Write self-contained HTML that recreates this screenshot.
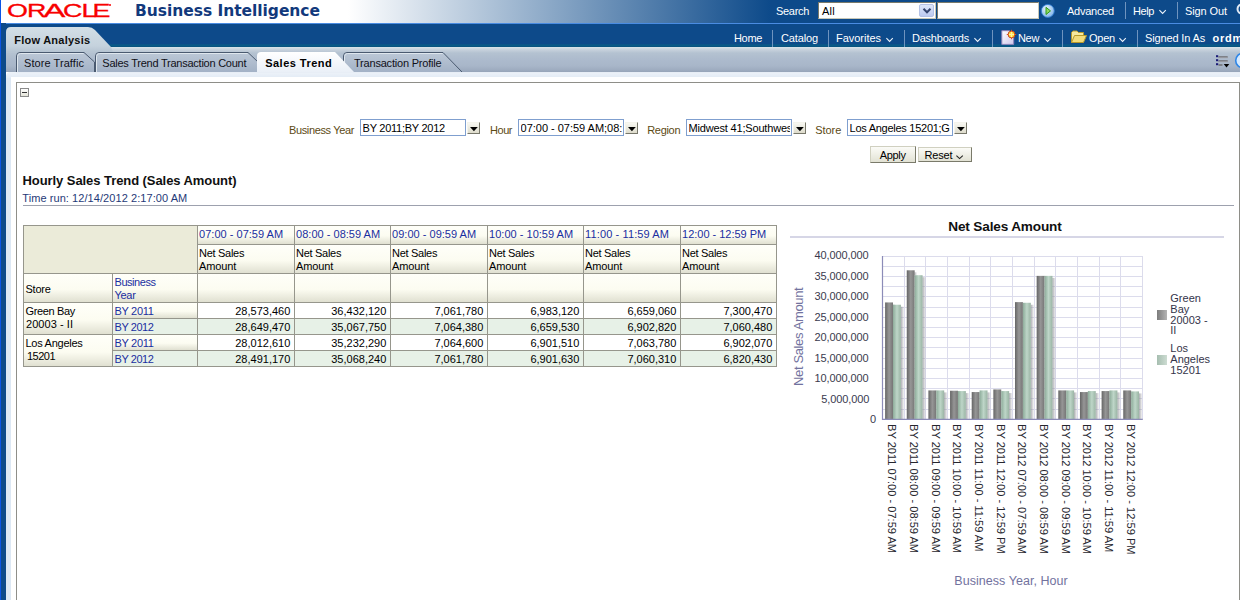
<!DOCTYPE html>
<html lang="en">
<head>
<meta charset="utf-8">
<title>Oracle Business Intelligence - Flow Analysis</title>
<style>
html,body{margin:0;padding:0;}
body{width:1240px;height:600px;overflow:hidden;background:#fff;position:relative;font-family:"Liberation Sans",sans-serif;font-size:11px;}
.t{position:absolute;white-space:nowrap;}
.r{position:absolute;box-sizing:border-box;}
svg{position:absolute;overflow:visible;}

</style>
</head>
<body>
<div class="r" style="left:0px;top:0px;width:1240px;height:23px;background:linear-gradient(90deg,#fff 0,#fff 348px,#0d4a8a 770px,#0d4a8a 100%);"></div>
<div class="r" style="left:0px;top:23px;width:1240px;height:1px;background:#4a8ce2;"></div>
<div class="r" style="left:0px;top:24px;width:1240px;height:23px;background:#0d4a8a;"></div>
<div class="r" style="left:0px;top:44px;width:1240px;height:3px;background:linear-gradient(180deg,#0c5289,#085b86 60%,#07507c);"></div>
<div class="r" style="left:0px;top:47px;width:1240px;height:25px;background:linear-gradient(180deg,#dbe4ea 0,#c5d0db 3px,#b4c2d1 6px,#adbbcd 12px,#a8b6c9 19px,#9ba9bd 24px,#96a4b8 25px);"></div>
<div class="r" style="left:1px;top:23px;width:5px;height:577px;background:#0d4a8a;"></div>
<div class="r" style="left:6px;top:72px;width:1234px;height:528px;background:#dde8f4;border-top-left-radius:5px;"></div>
<div class="r" style="left:6px;top:72px;width:1234px;height:6px;background:linear-gradient(180deg,#eef3f9,#e2ebf5);border-top-left-radius:5px;"></div>
<div class="r" style="left:11px;top:77px;width:1229px;height:523px;background:#fff;"></div>
<div class="r" style="left:0px;top:0px;width:1px;height:600px;background:#0a55e6;"></div>
<div class="r" style="left:16px;top:82px;width:1224px;height:520px;border:1px solid #8e8e88;border-bottom:none;"></div>
<svg width="1240" height="80" style="left:0;top:0" viewBox="0 0 1240 80">
<defs>
<linearGradient id="fa" x1="0" y1="0" x2="0" y2="1"><stop offset="0" stop-color="#d3dfe6"/><stop offset="0.75" stop-color="#c5d2dd"/><stop offset="1" stop-color="#b6c4d2"/></linearGradient>
<linearGradient id="tb" x1="0" y1="0" x2="0" y2="1"><stop offset="0" stop-color="#bcc8d7"/><stop offset="1" stop-color="#a3b2c6"/></linearGradient>
<linearGradient id="ta" x1="0" y1="0" x2="0" y2="1"><stop offset="0" stop-color="#ffffff"/><stop offset="1" stop-color="#e9eff7"/></linearGradient>
</defs>
<path d="M6 52 L6 32 Q6 27 11 27 L88 27 Q92 27 95 30 L111 47 L113 52 Z" fill="url(#fa)"/>
<!-- inactive tabs -->
<path d="M16.5 72 L16.5 56 Q16.5 52.5 20 52.5 L84 52.5 L94.5 62 L94.5 72 Z" fill="url(#tb)"/><path d="M16.5 72 L16.5 56 Q16.5 52.5 20 52.5 L84 52.5 L94.5 62 L94.5 72" fill="none" stroke="#4a5a70" stroke-width="1"/>
<path d="M17.5 72 L17.5 56.5 Q17.5 53.5 20.5 53.5 L83.5 53.5" fill="none" stroke="#dfe7ee" stroke-width="1"/>
<path d="M95.500 72 L95.500 56 Q95.500 52.5 99.000 52.5 L248 52.5 L258 62 L258 72 Z" fill="url(#tb)"/><path d="M95.500 72 L95.500 56 Q95.500 52.5 99.000 52.5 L248 52.5 L258 62 L258 72" fill="none" stroke="#4a5a70" stroke-width="1"/>
<path d="M96.5 72 L96.5 56.5 Q96.5 53.5 99.5 53.5 L247.5 53.5" fill="none" stroke="#dfe7ee" stroke-width="1"/>
<path d="M343.5 72 L343.5 56 Q343.5 52.5 347 52.5 L443 52.5 L462 72 Z" fill="url(#tb)"/><path d="M343.5 72 L343.5 56 Q343.5 52.5 347 52.5 L443 52.5 L462 72" fill="none" stroke="#4a5a70" stroke-width="1"/>
<path d="M344.5 72 L344.5 56.5 Q344.5 53.5 347.5 53.5 L442.5 53.5" fill="none" stroke="#dfe7ee" stroke-width="1"/>
<!-- active tab -->
<path d="M257 73 L257 56 Q257 52 261 52 L335 52 L354 72 L354 73 Z" fill="url(#ta)"/>
</svg>
<div class="r" style="left:16px;top:72px;width:1224px;height:1px;background:#e8eef6;"></div>
<span class="t" style="left:7.1px;top:1.72px;font-size:18.4px;line-height:18.4px;color:#f80000;transform:scaleX(1.46);transform-origin:0 0;-webkit-text-stroke:0.3px #f80000;"><span style="letter-spacing:-0.6px">O</span><span style="letter-spacing:-2.1px">R</span><span style="display:inline-block;transform:scaleX(1.22);transform-origin:0 0;letter-spacing:1.1px">A</span><span style="letter-spacing:-0.5px">C</span><span style="letter-spacing:-2.7px">L</span>E</span>
<div class="r" style="left:109px;top:4px;width:2px;height:2px;background:#f80000;border-radius:1px;"></div>
<span class="t" style="letter-spacing:-0.038px;left:135.00px;top:4.18px;font-size:15.5px;line-height:15.5px;font-weight:700;font-family:'DejaVu Sans','Liberation Sans',sans-serif;color:#12397c;">Business Intelligence</span>
<span class="t" style="letter-spacing:-0.310px;left:776.00px;top:5.99px;font-size:11px;line-height:11px;color:#ffffff;">Search</span>
<div class="r" style="left:818px;top:2px;width:118px;height:17px;background:#fff;border:1px solid #7a7a6a;border-right-color:#c8c8b8;border-bottom-color:#c8c8b8;"></div>
<span class="t" style="letter-spacing:0.255px;left:822.00px;top:5.99px;font-size:11px;line-height:11px;color:#000;">All</span>
<div class="r" style="left:919px;top:4px;width:15px;height:13px;background:linear-gradient(180deg,#dde6fa,#bccaf0);border:1px solid #b4c2e6;border-radius:2px;"></div>
<svg width="10" height="8" style="left:921.5px;top:7px" viewBox="0 0 10 8"><path d="M1.5 1.8 L5 5.3 L8.5 1.8" fill="none" stroke="#34446e" stroke-width="2"/></svg>
<div class="r" style="left:937px;top:2px;width:102px;height:17px;background:#fff;border:1px solid #7a7a6a;border-right-color:#c8c8b8;border-bottom-color:#c8c8b8;"></div>
<svg width="14" height="14" style="left:1041px;top:4px" viewBox="0 0 14 14"><defs><radialGradient id="go" cx="0.4" cy="0.35" r="0.7"><stop offset="0" stop-color="#e8f4ff"/><stop offset="1" stop-color="#7ab0e8"/></radialGradient></defs><circle cx="6.800" cy="6.9" r="6.500" fill="url(#go)" stroke="#2f7ad0" stroke-width="0.9"/><path d="M5 3.300 L9.5 6.9 L5 10.5 Z" fill="#8fd860" stroke="#2f9a1c" stroke-width="1"/></svg>
<span class="t" style="letter-spacing:-0.242px;left:1067.00px;top:5.99px;font-size:11px;line-height:11px;color:#ffffff;">Advanced</span>
<div class="r" style="left:1125px;top:2px;width:1px;height:17px;background:#6f94bf;"></div>
<span class="t" style="letter-spacing:-0.406px;left:1133.00px;top:5.99px;font-size:11px;line-height:11px;color:#ffffff;">Help</span>
<svg width="8" height="6" style="left:1159px;top:8.8px" viewBox="0 0 8 6"><path d="M0.4 1.2 L3.6 4.4 L6.8 1.2" fill="none" stroke="#eef4fb" stroke-width="1.1"/></svg>
<div class="r" style="left:1177px;top:2px;width:1px;height:17px;background:#6f94bf;"></div>
<span class="t" style="letter-spacing:-0.102px;left:1185.00px;top:5.99px;font-size:11px;line-height:11px;color:#ffffff;">Sign Out</span>
<svg width="8" height="16" style="left:1236px;top:3px" viewBox="0 0 8 16"><circle cx="6" cy="6" r="4.5" fill="none" stroke="#dfe8f4" stroke-width="2"/></svg>
<span class="t" style="letter-spacing:-0.336px;left:734.00px;top:32.99px;font-size:11px;line-height:11px;color:#ffffff;">Home</span>
<div class="r" style="left:772px;top:30px;width:1px;height:17px;background:#6f94bf;"></div>
<span class="t" style="letter-spacing:-0.132px;left:781.00px;top:32.99px;font-size:11px;line-height:11px;color:#ffffff;">Catalog</span>
<div class="r" style="left:828px;top:30px;width:1px;height:17px;background:#6f94bf;"></div>
<span class="t" style="letter-spacing:-0.028px;left:836.00px;top:32.99px;font-size:11px;line-height:11px;color:#ffffff;">Favorites</span>
<svg width="8" height="6" style="left:886px;top:37px" viewBox="0 0 8 6"><path d="M0.4 1.2 L3.6 4.4 L6.8 1.2" fill="none" stroke="#eef4fb" stroke-width="1.1"/></svg>
<div class="r" style="left:904px;top:30px;width:1px;height:17px;background:#6f94bf;"></div>
<span class="t" style="letter-spacing:-0.233px;left:912.00px;top:32.99px;font-size:11px;line-height:11px;color:#ffffff;">Dashboards</span>
<svg width="8" height="6" style="left:974px;top:37px" viewBox="0 0 8 6"><path d="M0.4 1.2 L3.6 4.4 L6.8 1.2" fill="none" stroke="#eef4fb" stroke-width="1.1"/></svg>
<div class="r" style="left:992px;top:30px;width:1px;height:17px;background:#6f94bf;"></div>
<svg width="18" height="18" style="left:1000px;top:28px" viewBox="0 0 18 18"><defs><linearGradient id="pg" x1="0" y1="0" x2="1" y2="1"><stop offset="0" stop-color="#ffffff"/><stop offset="1" stop-color="#cfc6ea"/></linearGradient></defs><path d="M1.800 2.700 L9.500 2.700 L13.700 7 L13.700 16.400 L1.800 16.400 Z" fill="url(#pg)" stroke="#8d82b8" stroke-width="1"/><circle cx="11.500" cy="6.500" r="3.400" fill="#ffd83a" stroke="#c8481a" stroke-width="1"/><path d="M11.500 1.800 L11.500 11.200 M6.800 6.500 L16.200 6.500" stroke="#d8501a" stroke-width="1"/><path d="M11.500 3.800 L11.500 9.200 M8.800 6.500 L14.200 6.500" stroke="#fff6a0" stroke-width="1.2"/></svg>
<span class="t" style="letter-spacing:-0.339px;left:1018.00px;top:32.99px;font-size:11px;line-height:11px;color:#ffffff;">New</span>
<svg width="8" height="6" style="left:1044px;top:37px" viewBox="0 0 8 6"><path d="M0.4 1.2 L3.6 4.4 L6.8 1.2" fill="none" stroke="#eef4fb" stroke-width="1.1"/></svg>
<div class="r" style="left:1062px;top:30px;width:1px;height:17px;background:#6f94bf;"></div>
<svg width="18" height="14" style="left:1070px;top:30px" viewBox="0 0 18 14"><path d="M1.5 12.5 L1.5 2.5 L3 1 L7 1 L8.5 2.5 L13.5 2.5 L13.5 5" fill="#f6e9a0" stroke="#b89a2a" stroke-width="1"/><path d="M1.5 12.5 L4.5 5.5 L16.5 5.5 L13.5 12.5 Z" fill="#f2dc7a" stroke="#b89a2a" stroke-width="1"/></svg>
<span class="t" style="letter-spacing:-0.230px;left:1089.00px;top:32.99px;font-size:11px;line-height:11px;color:#ffffff;">Open</span>
<svg width="8" height="6" style="left:1119px;top:37px" viewBox="0 0 8 6"><path d="M0.4 1.2 L3.6 4.4 L6.8 1.2" fill="none" stroke="#eef4fb" stroke-width="1.1"/></svg>
<div class="r" style="left:1137px;top:30px;width:1px;height:17px;background:#6f94bf;"></div>
<span class="t" style="letter-spacing:-0.148px;left:1145.00px;top:32.99px;font-size:11px;line-height:11px;color:#ffffff;">Signed In As</span>
<span class="t" style="left:1212.60px;top:32.99px;font-size:11px;line-height:11px;font-weight:700;color:#ffffff;letter-spacing:0.7px;">ordm</span>
<span class="t" style="letter-spacing:0.234px;left:14.30px;top:34.99px;font-size:11px;line-height:11px;font-weight:700;color:#101010;">Flow Analysis</span>
<span class="t" style="letter-spacing:0.069px;left:24.00px;top:57.99px;font-size:11px;line-height:11px;color:#101018;">Store Traffic</span>
<span class="t" style="letter-spacing:-0.242px;left:102.30px;top:57.99px;font-size:11px;line-height:11px;color:#101018;">Sales Trend Transaction Count</span>
<span class="t" style="letter-spacing:0.476px;left:265.20px;top:57.99px;font-size:11px;line-height:11px;font-weight:700;color:#000;">Sales Trend</span>
<span class="t" style="letter-spacing:-0.201px;left:354.00px;top:57.99px;font-size:11px;line-height:11px;color:#101018;">Transaction Profile</span>
<svg width="26" height="18" style="left:1214px;top:52px" viewBox="0 0 26 18"><path d="M4.5 5 L13.7 5 M4.5 9 L13.7 9 M4.5 13 L8.5 13" stroke="#6e6e72" stroke-width="1.3"/><path d="M4.500 5.8 L13.700 5.8 M4.5 9.8 L13.7 9.8" stroke="#a9a9b0" stroke-width="0.8"/><rect x="2" y="3.2" width="2.2" height="2" fill="#1c1c78"/><rect x="2" y="7.2" width="2.2" height="2" fill="#1c1c78"/><rect x="2" y="11.2" width="2.2" height="2" fill="#1c1c78"/><path d="M9.700 12 L15.3 12 L12.5 15.4 Z" fill="#000"/><circle cx="29" cy="8.5" r="7.3" fill="#d6eaff" stroke="#2f86e6" stroke-width="1.6"/></svg>
<div class="r" style="left:20px;top:88px;width:9px;height:9px;border:1px solid #8a8a8a;background:linear-gradient(180deg,#fff,#e4e4d8);"></div>
<div class="r" style="left:22px;top:92px;width:5px;height:1px;background:#333;"></div>
<span class="t" style="letter-spacing:-0.363px;left:289.00px;top:124.99px;font-size:11px;line-height:11px;color:#5c4a14;">Business Year</span>
<div class="r" style="left:360px;top:119px;width:106px;height:17px;background:#fff;border:1px solid #7f9fcf;"></div>
<span class="t" style="left:362.60px;top:122.99px;font-size:11px;line-height:11px;color:#000;max-width:101.5px;overflow:hidden;letter-spacing:-0.260px;">BY 2011;BY 2012</span>
<div class="r" style="left:467px;top:122px;width:13px;height:12px;background:linear-gradient(180deg,#f8f8f2,#dedccc);border:1px solid #f4f4ec;border-right-color:#77776a;border-bottom-color:#77776a;"></div>
<svg width="8" height="5" style="left:469.8px;top:126.5px" viewBox="0 0 8 5"><path d="M0 0 L7.8 0 L3.9 4.2 Z" fill="#000"/></svg>
<span class="t" style="letter-spacing:-0.461px;left:490.00px;top:124.99px;font-size:11px;line-height:11px;color:#5c4a14;">Hour</span>
<div class="r" style="left:518px;top:119px;width:106px;height:17px;background:#fff;border:1px solid #7f9fcf;"></div>
<span class="t" style="left:520.60px;top:122.99px;font-size:11px;line-height:11px;color:#000;max-width:101.5px;overflow:hidden;letter-spacing:-0.020px;">07:00 - 07:59 AM;08:00</span>
<div class="r" style="left:625px;top:122px;width:13px;height:12px;background:linear-gradient(180deg,#f8f8f2,#dedccc);border:1px solid #f4f4ec;border-right-color:#77776a;border-bottom-color:#77776a;"></div>
<svg width="8" height="5" style="left:627.8px;top:126.5px" viewBox="0 0 8 5"><path d="M0 0 L7.8 0 L3.9 4.2 Z" fill="#000"/></svg>
<span class="t" style="letter-spacing:-0.310px;left:647.20px;top:124.99px;font-size:11px;line-height:11px;color:#5c4a14;">Region</span>
<div class="r" style="left:686px;top:119px;width:106px;height:17px;background:#fff;border:1px solid #7f9fcf;"></div>
<span class="t" style="left:688.60px;top:122.99px;font-size:11px;line-height:11px;color:#000;max-width:101.5px;overflow:hidden;letter-spacing:-0.180px;">Midwest 41;Southwest</span>
<div class="r" style="left:793px;top:122px;width:13px;height:12px;background:linear-gradient(180deg,#f8f8f2,#dedccc);border:1px solid #f4f4ec;border-right-color:#77776a;border-bottom-color:#77776a;"></div>
<svg width="8" height="5" style="left:795.8px;top:126.5px" viewBox="0 0 8 5"><path d="M0 0 L7.8 0 L3.9 4.2 Z" fill="#000"/></svg>
<span class="t" style="letter-spacing:-0.059px;left:815.20px;top:124.99px;font-size:11px;line-height:11px;color:#5c4a14;">Store</span>
<div class="r" style="left:847px;top:119px;width:106px;height:17px;background:#fff;border:1px solid #7f9fcf;"></div>
<span class="t" style="left:849.60px;top:122.99px;font-size:11px;line-height:11px;color:#000;max-width:101.5px;overflow:hidden;letter-spacing:-0.270px;">Los Angeles 15201;G</span>
<div class="r" style="left:954px;top:122px;width:13px;height:12px;background:linear-gradient(180deg,#f8f8f2,#dedccc);border:1px solid #f4f4ec;border-right-color:#77776a;border-bottom-color:#77776a;"></div>
<svg width="8" height="5" style="left:956.8px;top:126.5px" viewBox="0 0 8 5"><path d="M0 0 L7.8 0 L3.9 4.2 Z" fill="#000"/></svg>
<div class="r" style="left:870px;top:146px;width:46px;height:17px;background:linear-gradient(180deg,#fbfbf7 0,#efefe6 50%,#e2e2d4 100%);border:1px solid #d0d0c0;border-right-color:#7a7a6a;border-bottom-color:#7a7a6a;"></div>
<span class="t" style="letter-spacing:-0.306px;left:879.70px;top:149.99px;font-size:11px;line-height:11px;color:#000;">Apply</span>
<div class="r" style="left:918px;top:147px;width:54px;height:15px;background:linear-gradient(180deg,#fbfbf7 0,#efefe6 50%,#e2e2d4 100%);border:1px solid #d0d0c0;border-right-color:#7a7a6a;border-bottom-color:#7a7a6a;"></div>
<span class="t" style="letter-spacing:-0.150px;left:924.50px;top:149.99px;font-size:11px;line-height:11px;color:#000;">Reset</span>
<svg width="8" height="5" style="left:956px;top:155px" viewBox="0 0 8 5"><path d="M0.4 0.6 L3.6 3.6 L6.8 0.6" fill="none" stroke="#222" stroke-width="1.1"/></svg>
<span class="t" style="letter-spacing:-0.068px;left:22.50px;top:174.30px;font-size:13px;line-height:13px;font-weight:700;color:#101010;">Hourly Sales Trend (Sales Amount)</span>
<span class="t" style="letter-spacing:0.069px;left:22.30px;top:192.99px;font-size:11px;line-height:11px;color:#1f3a78;">Time run: 12/14/2012 2:17:00 AM</span>
<div class="r" style="left:23px;top:205px;width:1211px;height:1px;background:#9da1ae;"></div>
<div class="r" style="left:23px;top:225px;width:754px;height:142px;background:#96968c;"></div>
<div class="r" style="left:24px;top:226px;width:173px;height:47px;background:#ebebd9;"></div>
<div class="r" style="left:198px;top:226px;width:96px;height:18px;background:linear-gradient(180deg,#fffff9 0,#fcfcf1 55%,#e0e0d1 100%);"></div>
<div class="r" style="left:198px;top:245px;width:96px;height:28px;background:linear-gradient(180deg,#fffff9 0,#fcfcf1 55%,#e0e0d1 100%);"></div>
<div class="r" style="left:198px;top:274px;width:96px;height:28px;background:linear-gradient(180deg,#fffff9 0,#fcfcf1 55%,#e0e0d1 100%);"></div>
<span class="t" style="letter-spacing:0.014px;left:199.10px;top:228.99px;font-size:11px;line-height:11px;color:#1a2ea0;">07:00 - 07:59 AM</span>
<span class="t" style="letter-spacing:-0.300px;left:199.10px;top:247.99px;font-size:11px;line-height:11px;color:#000;">Net Sales</span>
<span class="t" style="letter-spacing:-0.154px;left:199.10px;top:260.99px;font-size:11px;line-height:11px;color:#000;">Amount</span>
<div class="r" style="left:295px;top:226px;width:95px;height:18px;background:linear-gradient(180deg,#fffff9 0,#fcfcf1 55%,#e0e0d1 100%);"></div>
<div class="r" style="left:295px;top:245px;width:95px;height:28px;background:linear-gradient(180deg,#fffff9 0,#fcfcf1 55%,#e0e0d1 100%);"></div>
<div class="r" style="left:295px;top:274px;width:95px;height:28px;background:linear-gradient(180deg,#fffff9 0,#fcfcf1 55%,#e0e0d1 100%);"></div>
<span class="t" style="letter-spacing:0.014px;left:296.10px;top:228.99px;font-size:11px;line-height:11px;color:#1a2ea0;">08:00 - 08:59 AM</span>
<span class="t" style="letter-spacing:-0.300px;left:296.10px;top:247.99px;font-size:11px;line-height:11px;color:#000;">Net Sales</span>
<span class="t" style="letter-spacing:-0.154px;left:296.10px;top:260.99px;font-size:11px;line-height:11px;color:#000;">Amount</span>
<div class="r" style="left:391px;top:226px;width:96px;height:18px;background:linear-gradient(180deg,#fffff9 0,#fcfcf1 55%,#e0e0d1 100%);"></div>
<div class="r" style="left:391px;top:245px;width:96px;height:28px;background:linear-gradient(180deg,#fffff9 0,#fcfcf1 55%,#e0e0d1 100%);"></div>
<div class="r" style="left:391px;top:274px;width:96px;height:28px;background:linear-gradient(180deg,#fffff9 0,#fcfcf1 55%,#e0e0d1 100%);"></div>
<span class="t" style="letter-spacing:0.014px;left:392.10px;top:228.99px;font-size:11px;line-height:11px;color:#1a2ea0;">09:00 - 09:59 AM</span>
<span class="t" style="letter-spacing:-0.300px;left:392.10px;top:247.99px;font-size:11px;line-height:11px;color:#000;">Net Sales</span>
<span class="t" style="letter-spacing:-0.154px;left:392.10px;top:260.99px;font-size:11px;line-height:11px;color:#000;">Amount</span>
<div class="r" style="left:488px;top:226px;width:95px;height:18px;background:linear-gradient(180deg,#fffff9 0,#fcfcf1 55%,#e0e0d1 100%);"></div>
<div class="r" style="left:488px;top:245px;width:95px;height:28px;background:linear-gradient(180deg,#fffff9 0,#fcfcf1 55%,#e0e0d1 100%);"></div>
<div class="r" style="left:488px;top:274px;width:95px;height:28px;background:linear-gradient(180deg,#fffff9 0,#fcfcf1 55%,#e0e0d1 100%);"></div>
<span class="t" style="letter-spacing:0.014px;left:489.10px;top:228.99px;font-size:11px;line-height:11px;color:#1a2ea0;">10:00 - 10:59 AM</span>
<span class="t" style="letter-spacing:-0.300px;left:489.10px;top:247.99px;font-size:11px;line-height:11px;color:#000;">Net Sales</span>
<span class="t" style="letter-spacing:-0.154px;left:489.10px;top:260.99px;font-size:11px;line-height:11px;color:#000;">Amount</span>
<div class="r" style="left:584px;top:226px;width:96px;height:18px;background:linear-gradient(180deg,#fffff9 0,#fcfcf1 55%,#e0e0d1 100%);"></div>
<div class="r" style="left:584px;top:245px;width:96px;height:28px;background:linear-gradient(180deg,#fffff9 0,#fcfcf1 55%,#e0e0d1 100%);"></div>
<div class="r" style="left:584px;top:274px;width:96px;height:28px;background:linear-gradient(180deg,#fffff9 0,#fcfcf1 55%,#e0e0d1 100%);"></div>
<span class="t" style="letter-spacing:0.115px;left:585.10px;top:228.99px;font-size:11px;line-height:11px;color:#1a2ea0;">11:00 - 11:59 AM</span>
<span class="t" style="letter-spacing:-0.300px;left:585.10px;top:247.99px;font-size:11px;line-height:11px;color:#000;">Net Sales</span>
<span class="t" style="letter-spacing:-0.154px;left:585.10px;top:260.99px;font-size:11px;line-height:11px;color:#000;">Amount</span>
<div class="r" style="left:681px;top:226px;width:95px;height:18px;background:linear-gradient(180deg,#fffff9 0,#fcfcf1 55%,#e0e0d1 100%);"></div>
<div class="r" style="left:681px;top:245px;width:95px;height:28px;background:linear-gradient(180deg,#fffff9 0,#fcfcf1 55%,#e0e0d1 100%);"></div>
<div class="r" style="left:681px;top:274px;width:95px;height:28px;background:linear-gradient(180deg,#fffff9 0,#fcfcf1 55%,#e0e0d1 100%);"></div>
<span class="t" style="letter-spacing:-0.024px;left:682.10px;top:228.99px;font-size:11px;line-height:11px;color:#1a2ea0;">12:00 - 12:59 PM</span>
<span class="t" style="letter-spacing:-0.300px;left:682.10px;top:247.99px;font-size:11px;line-height:11px;color:#000;">Net Sales</span>
<span class="t" style="letter-spacing:-0.154px;left:682.10px;top:260.99px;font-size:11px;line-height:11px;color:#000;">Amount</span>
<div class="r" style="left:24px;top:274px;width:88px;height:28px;background:linear-gradient(180deg,#fffff9 0,#fcfcf1 55%,#e0e0d1 100%);"></div>
<div class="r" style="left:113px;top:274px;width:84px;height:28px;background:linear-gradient(180deg,#fffff9 0,#fcfcf1 55%,#e0e0d1 100%);"></div>
<span class="t" style="letter-spacing:-0.259px;left:25.50px;top:283.99px;font-size:11px;line-height:11px;color:#000;">Store</span>
<span class="t" style="letter-spacing:-0.455px;left:114.50px;top:276.99px;font-size:11px;line-height:11px;color:#1a2ea0;">Business</span>
<span class="t" style="letter-spacing:-0.309px;left:114.50px;top:289.99px;font-size:11px;line-height:11px;color:#1a2ea0;">Year</span>
<div class="r" style="left:24px;top:303px;width:88px;height:31px;background:linear-gradient(180deg,#fffff9 0,#fcfcf1 55%,#e0e0d1 100%);"></div>
<div class="r" style="left:24px;top:335px;width:88px;height:31px;background:linear-gradient(180deg,#fffff9 0,#fcfcf1 55%,#e0e0d1 100%);"></div>
<span class="t" style="letter-spacing:-0.344px;left:25.50px;top:305.99px;font-size:11px;line-height:11px;color:#000;">Green Bay</span>
<span class="t" style="letter-spacing:0.052px;left:26.00px;top:318.99px;font-size:11px;line-height:11px;color:#000;">20003 - II</span>
<span class="t" style="letter-spacing:-0.267px;left:25.50px;top:337.99px;font-size:11px;line-height:11px;color:#000;">Los Angeles</span>
<span class="t" style="letter-spacing:-0.519px;left:27.00px;top:350.99px;font-size:11px;line-height:11px;color:#000;">15201</span>
<div class="r" style="left:113px;top:303px;width:84px;height:15px;background:linear-gradient(180deg,#fffff9 0,#fcfcf1 55%,#e0e0d1 100%);"></div>
<span class="t" style="letter-spacing:-0.312px;left:114.50px;top:305.99px;font-size:11px;line-height:11px;color:#1a2ea0;">BY 2011</span>
<div class="r" style="left:198px;top:303px;width:96px;height:15px;background:#fff;"></div>
<span class="t" style="right:949.70px;top:305.99px;font-size:11px;line-height:11px;color:#000;">28,573,460</span>
<div class="r" style="left:295px;top:303px;width:95px;height:15px;background:#fff;"></div>
<span class="t" style="right:853.70px;top:305.99px;font-size:11px;line-height:11px;color:#000;">36,432,120</span>
<div class="r" style="left:391px;top:303px;width:96px;height:15px;background:#fff;"></div>
<span class="t" style="right:756.70px;top:305.99px;font-size:11px;line-height:11px;color:#000;">7,061,780</span>
<div class="r" style="left:488px;top:303px;width:95px;height:15px;background:#fff;"></div>
<span class="t" style="right:660.70px;top:305.99px;font-size:11px;line-height:11px;color:#000;">6,983,120</span>
<div class="r" style="left:584px;top:303px;width:96px;height:15px;background:#fff;"></div>
<span class="t" style="right:563.70px;top:305.99px;font-size:11px;line-height:11px;color:#000;">6,659,060</span>
<div class="r" style="left:681px;top:303px;width:95px;height:15px;background:#fff;"></div>
<span class="t" style="right:467.70px;top:305.99px;font-size:11px;line-height:11px;color:#000;">7,300,470</span>
<div class="r" style="left:113px;top:319px;width:84px;height:15px;background:#e7f1e7;"></div>
<span class="t" style="letter-spacing:-0.431px;left:114.50px;top:321.99px;font-size:11px;line-height:11px;color:#1a2ea0;">BY 2012</span>
<div class="r" style="left:198px;top:319px;width:96px;height:15px;background:#e7f1e7;"></div>
<span class="t" style="right:949.70px;top:321.99px;font-size:11px;line-height:11px;color:#000;">28,649,470</span>
<div class="r" style="left:295px;top:319px;width:95px;height:15px;background:#e7f1e7;"></div>
<span class="t" style="right:853.70px;top:321.99px;font-size:11px;line-height:11px;color:#000;">35,067,750</span>
<div class="r" style="left:391px;top:319px;width:96px;height:15px;background:#e7f1e7;"></div>
<span class="t" style="right:756.70px;top:321.99px;font-size:11px;line-height:11px;color:#000;">7,064,380</span>
<div class="r" style="left:488px;top:319px;width:95px;height:15px;background:#e7f1e7;"></div>
<span class="t" style="right:660.70px;top:321.99px;font-size:11px;line-height:11px;color:#000;">6,659,530</span>
<div class="r" style="left:584px;top:319px;width:96px;height:15px;background:#e7f1e7;"></div>
<span class="t" style="right:563.70px;top:321.99px;font-size:11px;line-height:11px;color:#000;">6,902,820</span>
<div class="r" style="left:681px;top:319px;width:95px;height:15px;background:#e7f1e7;"></div>
<span class="t" style="right:467.70px;top:321.99px;font-size:11px;line-height:11px;color:#000;">7,060,480</span>
<div class="r" style="left:113px;top:335px;width:84px;height:15px;background:linear-gradient(180deg,#fffff9 0,#fcfcf1 55%,#e0e0d1 100%);"></div>
<span class="t" style="letter-spacing:-0.312px;left:114.50px;top:337.99px;font-size:11px;line-height:11px;color:#1a2ea0;">BY 2011</span>
<div class="r" style="left:198px;top:335px;width:96px;height:15px;background:#fff;"></div>
<span class="t" style="right:949.70px;top:337.99px;font-size:11px;line-height:11px;color:#000;">28,012,610</span>
<div class="r" style="left:295px;top:335px;width:95px;height:15px;background:#fff;"></div>
<span class="t" style="right:853.70px;top:337.99px;font-size:11px;line-height:11px;color:#000;">35,232,290</span>
<div class="r" style="left:391px;top:335px;width:96px;height:15px;background:#fff;"></div>
<span class="t" style="right:756.70px;top:337.99px;font-size:11px;line-height:11px;color:#000;">7,064,600</span>
<div class="r" style="left:488px;top:335px;width:95px;height:15px;background:#fff;"></div>
<span class="t" style="right:660.70px;top:337.99px;font-size:11px;line-height:11px;color:#000;">6,901,510</span>
<div class="r" style="left:584px;top:335px;width:96px;height:15px;background:#fff;"></div>
<span class="t" style="right:563.70px;top:337.99px;font-size:11px;line-height:11px;color:#000;">7,063,780</span>
<div class="r" style="left:681px;top:335px;width:95px;height:15px;background:#fff;"></div>
<span class="t" style="right:467.70px;top:337.99px;font-size:11px;line-height:11px;color:#000;">6,902,070</span>
<div class="r" style="left:113px;top:351px;width:84px;height:15px;background:#e7f1e7;"></div>
<span class="t" style="letter-spacing:-0.431px;left:114.50px;top:353.99px;font-size:11px;line-height:11px;color:#1a2ea0;">BY 2012</span>
<div class="r" style="left:198px;top:351px;width:96px;height:15px;background:#e7f1e7;"></div>
<span class="t" style="right:949.70px;top:353.99px;font-size:11px;line-height:11px;color:#000;">28,491,170</span>
<div class="r" style="left:295px;top:351px;width:95px;height:15px;background:#e7f1e7;"></div>
<span class="t" style="right:853.70px;top:353.99px;font-size:11px;line-height:11px;color:#000;">35,068,240</span>
<div class="r" style="left:391px;top:351px;width:96px;height:15px;background:#e7f1e7;"></div>
<span class="t" style="right:756.70px;top:353.99px;font-size:11px;line-height:11px;color:#000;">7,061,780</span>
<div class="r" style="left:488px;top:351px;width:95px;height:15px;background:#e7f1e7;"></div>
<span class="t" style="right:660.70px;top:353.99px;font-size:11px;line-height:11px;color:#000;">6,901,630</span>
<div class="r" style="left:584px;top:351px;width:96px;height:15px;background:#e7f1e7;"></div>
<span class="t" style="right:563.70px;top:353.99px;font-size:11px;line-height:11px;color:#000;">7,060,310</span>
<div class="r" style="left:681px;top:351px;width:95px;height:15px;background:#e7f1e7;"></div>
<span class="t" style="right:467.70px;top:353.99px;font-size:11px;line-height:11px;color:#000;">6,820,430</span>
<span class="t" style="letter-spacing:-0.158px;left:948.30px;top:219.79px;font-size:13.6px;line-height:13.6px;font-weight:700;color:#101010;">Net Sales Amount</span>
<div class="r" style="left:790px;top:236px;width:434px;height:2px;background:#d6d6e6;"></div>
<svg width="1240" height="600" style="left:0;top:0" viewBox="0 0 1240 600">
<defs>
<linearGradient id="gg" x1="0" y1="0" x2="1" y2="0"><stop offset="0" stop-color="#666666"/><stop offset="0.5" stop-color="#969696"/><stop offset="1" stop-color="#767676"/></linearGradient>
<linearGradient id="gn" x1="0" y1="0" x2="1" y2="0"><stop offset="0" stop-color="#8dac9a"/><stop offset="0.5" stop-color="#bed6c8"/><stop offset="1" stop-color="#9ab4a4"/></linearGradient>
<linearGradient id="sh" x1="0" y1="0" x2="1" y2="0"><stop offset="0" stop-color="#8a8a92" stop-opacity="0.7"/><stop offset="1" stop-color="#8a8a90" stop-opacity="0"/></linearGradient>
<linearGradient id="lg1" x1="0" y1="0" x2="1" y2="0"><stop offset="0" stop-color="#7c7c7c"/><stop offset="1" stop-color="#b4b4b4"/></linearGradient>
<linearGradient id="lg2" x1="0" y1="0" x2="1" y2="0"><stop offset="0" stop-color="#a6beb0"/><stop offset="1" stop-color="#cddcd2"/></linearGradient>
</defs>
<path d="M882.50 256.10 H1142.30 M882.50 266.30 H1142.30 M882.50 276.50 H1142.30 M882.50 286.70 H1142.30 M882.50 296.90 H1142.30 M882.50 307.10 H1142.30 M882.50 317.30 H1142.30 M882.50 327.50 H1142.30 M882.50 337.70 H1142.30 M882.50 347.90 H1142.30 M882.50 358.10 H1142.30 M882.50 368.30 H1142.30 M882.50 378.50 H1142.30 M882.50 388.70 H1142.30 M882.50 398.90 H1142.30 M882.50 409.10 H1142.30 M904.15 256.10 V419.30 M925.80 256.10 V419.30 M947.45 256.10 V419.30 M969.10 256.10 V419.30 M990.75 256.10 V419.30 M1012.40 256.10 V419.30 M1034.05 256.10 V419.30 M1055.70 256.10 V419.30 M1077.35 256.10 V419.30 M1099.00 256.10 V419.30 M1120.65 256.10 V419.30 M1142.30 256.10 V419.30" stroke="#dcdcec" stroke-width="1" fill="none" shape-rendering="crispEdges"/>
<rect x="900.80" y="306.73" width="3.6" height="112.57" fill="url(#sh)"/>
<rect x="892.90" y="304.43" width="2.5" height="0.29" fill="url(#sh)"/>
<rect x="885.10" y="302.43" width="7.90" height="116.87" fill="url(#gg)"/>
<rect x="893.00" y="304.73" width="7.90" height="114.57" fill="url(#gn)"/>
<rect x="922.45" y="277.20" width="3.6" height="142.10" fill="url(#sh)"/>
<rect x="914.55" y="272.29" width="2.5" height="2.91" fill="url(#sh)"/>
<rect x="906.75" y="270.29" width="7.90" height="149.01" fill="url(#gg)"/>
<rect x="914.65" y="275.20" width="7.90" height="144.10" fill="url(#gn)"/>
<rect x="944.10" y="392.41" width="3.6" height="26.89" fill="url(#sh)"/>
<rect x="928.40" y="390.42" width="7.90" height="28.88" fill="url(#gg)"/>
<rect x="936.30" y="390.41" width="7.90" height="28.89" fill="url(#gn)"/>
<rect x="965.75" y="393.07" width="3.6" height="26.23" fill="url(#sh)"/>
<rect x="950.05" y="390.74" width="7.90" height="28.56" fill="url(#gg)"/>
<rect x="957.95" y="391.07" width="7.90" height="28.23" fill="url(#gn)"/>
<rect x="987.40" y="392.41" width="3.6" height="26.89" fill="url(#sh)"/>
<rect x="971.70" y="392.06" width="7.90" height="27.24" fill="url(#gg)"/>
<rect x="979.60" y="390.41" width="7.90" height="28.89" fill="url(#gn)"/>
<rect x="1009.05" y="393.07" width="3.6" height="26.23" fill="url(#sh)"/>
<rect x="1001.15" y="391.44" width="2.5" height="-0.37" fill="url(#sh)"/>
<rect x="993.35" y="389.44" width="7.90" height="29.86" fill="url(#gg)"/>
<rect x="1001.25" y="391.07" width="7.90" height="28.23" fill="url(#gn)"/>
<rect x="1030.70" y="304.77" width="3.6" height="114.53" fill="url(#sh)"/>
<rect x="1015.00" y="302.12" width="7.90" height="117.18" fill="url(#gg)"/>
<rect x="1022.90" y="302.77" width="7.90" height="116.53" fill="url(#gn)"/>
<rect x="1052.35" y="277.87" width="3.6" height="141.43" fill="url(#sh)"/>
<rect x="1036.65" y="275.87" width="7.90" height="143.43" fill="url(#gg)"/>
<rect x="1044.55" y="275.87" width="7.90" height="143.43" fill="url(#gn)"/>
<rect x="1074.00" y="392.42" width="3.6" height="26.88" fill="url(#sh)"/>
<rect x="1058.30" y="390.41" width="7.90" height="28.89" fill="url(#gg)"/>
<rect x="1066.20" y="390.42" width="7.90" height="28.88" fill="url(#gn)"/>
<rect x="1095.65" y="393.07" width="3.6" height="26.23" fill="url(#sh)"/>
<rect x="1079.95" y="392.06" width="7.90" height="27.24" fill="url(#gg)"/>
<rect x="1087.85" y="391.07" width="7.90" height="28.23" fill="url(#gn)"/>
<rect x="1117.30" y="392.42" width="3.6" height="26.88" fill="url(#sh)"/>
<rect x="1101.60" y="391.07" width="7.90" height="28.23" fill="url(#gg)"/>
<rect x="1109.50" y="390.42" width="7.90" height="28.88" fill="url(#gn)"/>
<rect x="1138.95" y="393.40" width="3.6" height="25.90" fill="url(#sh)"/>
<rect x="1123.25" y="390.42" width="7.90" height="28.88" fill="url(#gg)"/>
<rect x="1131.15" y="391.40" width="7.90" height="27.90" fill="url(#gn)"/>
<path d="M882.50 256.10 V419.30 H1142.80" stroke="#8c8cb8" stroke-width="1.2" fill="none"/>
<rect x="1157" y="310" width="10" height="10" fill="url(#lg1)"/>
<rect x="1157" y="355" width="10" height="10" fill="url(#lg2)"/>
</svg>
<span class="t" style="right:371.50px;top:249.99px;font-size:11px;line-height:11px;color:#3a3a4e;letter-spacing:-0.1px;">40,000,000</span>
<span class="t" style="right:371.50px;top:270.99px;font-size:11px;line-height:11px;color:#3a3a4e;letter-spacing:-0.1px;">35,000,000</span>
<span class="t" style="right:371.50px;top:290.99px;font-size:11px;line-height:11px;color:#3a3a4e;letter-spacing:-0.1px;">30,000,000</span>
<span class="t" style="right:371.50px;top:311.99px;font-size:11px;line-height:11px;color:#3a3a4e;letter-spacing:-0.1px;">25,000,000</span>
<span class="t" style="right:371.50px;top:331.99px;font-size:11px;line-height:11px;color:#3a3a4e;letter-spacing:-0.1px;">20,000,000</span>
<span class="t" style="right:371.50px;top:352.99px;font-size:11px;line-height:11px;color:#3a3a4e;letter-spacing:-0.1px;">15,000,000</span>
<span class="t" style="right:371.50px;top:372.99px;font-size:11px;line-height:11px;color:#3a3a4e;letter-spacing:-0.1px;">10,000,000</span>
<span class="t" style="right:370.70px;top:393.99px;font-size:11px;line-height:11px;color:#3a3a4e;letter-spacing:-0.1px;">5,000,000</span>
<span class="t" style="right:364.00px;top:413.99px;font-size:11px;line-height:11px;color:#3a3a4e;">0</span>
<span class="t" style="left:897.40px;top:424px;font-size:11.1px;line-height:11.1px;color:#26262e;transform:rotate(90deg);transform-origin:0 0;">BY 2011 07:00 - 07:59 AM</span>
<span class="t" style="left:919.05px;top:424px;font-size:11.1px;line-height:11.1px;color:#26262e;transform:rotate(90deg);transform-origin:0 0;">BY 2011 08:00 - 08:59 AM</span>
<span class="t" style="left:940.70px;top:424px;font-size:11.1px;line-height:11.1px;color:#26262e;transform:rotate(90deg);transform-origin:0 0;">BY 2011 09:00 - 09:59 AM</span>
<span class="t" style="left:962.35px;top:424px;font-size:11.1px;line-height:11.1px;color:#26262e;transform:rotate(90deg);transform-origin:0 0;">BY 2011 10:00 - 10:59 AM</span>
<span class="t" style="left:984.00px;top:424px;font-size:11.1px;line-height:11.1px;color:#26262e;transform:rotate(90deg);transform-origin:0 0;">BY 2011 11:00 - 11:59 AM</span>
<span class="t" style="left:1005.65px;top:424px;font-size:11.1px;line-height:11.1px;color:#26262e;transform:rotate(90deg);transform-origin:0 0;">BY 2011 12:00 - 12:59 PM</span>
<span class="t" style="left:1027.30px;top:424px;font-size:11.1px;line-height:11.1px;color:#26262e;transform:rotate(90deg);transform-origin:0 0;">BY 2012 07:00 - 07:59 AM</span>
<span class="t" style="left:1048.95px;top:424px;font-size:11.1px;line-height:11.1px;color:#26262e;transform:rotate(90deg);transform-origin:0 0;">BY 2012 08:00 - 08:59 AM</span>
<span class="t" style="left:1070.60px;top:424px;font-size:11.1px;line-height:11.1px;color:#26262e;transform:rotate(90deg);transform-origin:0 0;">BY 2012 09:00 - 09:59 AM</span>
<span class="t" style="left:1092.25px;top:424px;font-size:11.1px;line-height:11.1px;color:#26262e;transform:rotate(90deg);transform-origin:0 0;">BY 2012 10:00 - 10:59 AM</span>
<span class="t" style="left:1113.90px;top:424px;font-size:11.1px;line-height:11.1px;color:#26262e;transform:rotate(90deg);transform-origin:0 0;">BY 2012 11:00 - 11:59 AM</span>
<span class="t" style="left:1135.55px;top:424px;font-size:11.1px;line-height:11.1px;color:#26262e;transform:rotate(90deg);transform-origin:0 0;">BY 2012 12:00 - 12:59 PM</span>
<span class="t" style="letter-spacing:0.049px;left:954.30px;top:574.72px;font-size:12.5px;line-height:12.5px;color:#72729e;">Business Year, Hour</span>
<span class="t" style="left:791.60px;top:386.3px;font-size:13px;line-height:13px;color:#72729e;transform:rotate(-90deg);transform-origin:0 0;letter-spacing:-0.36px;">Net Sales Amount</span>
<span class="t" style="left:1170.30px;top:292.99px;font-size:11px;line-height:11px;color:#34344a;">Green</span>
<span class="t" style="left:1170.30px;top:303.79px;font-size:11px;line-height:11px;color:#34344a;">Bay</span>
<span class="t" style="left:1170.30px;top:314.59px;font-size:11px;line-height:11px;color:#34344a;">20003 -</span>
<span class="t" style="left:1170.30px;top:325.39px;font-size:11px;line-height:11px;color:#34344a;">II</span>
<span class="t" style="left:1170.30px;top:342.99px;font-size:11px;line-height:11px;color:#34344a;">Los</span>
<span class="t" style="left:1170.30px;top:353.79px;font-size:11px;line-height:11px;color:#34344a;">Angeles</span>
<span class="t" style="left:1170.30px;top:364.59px;font-size:11px;line-height:11px;color:#34344a;">15201</span>
</body>
</html>
